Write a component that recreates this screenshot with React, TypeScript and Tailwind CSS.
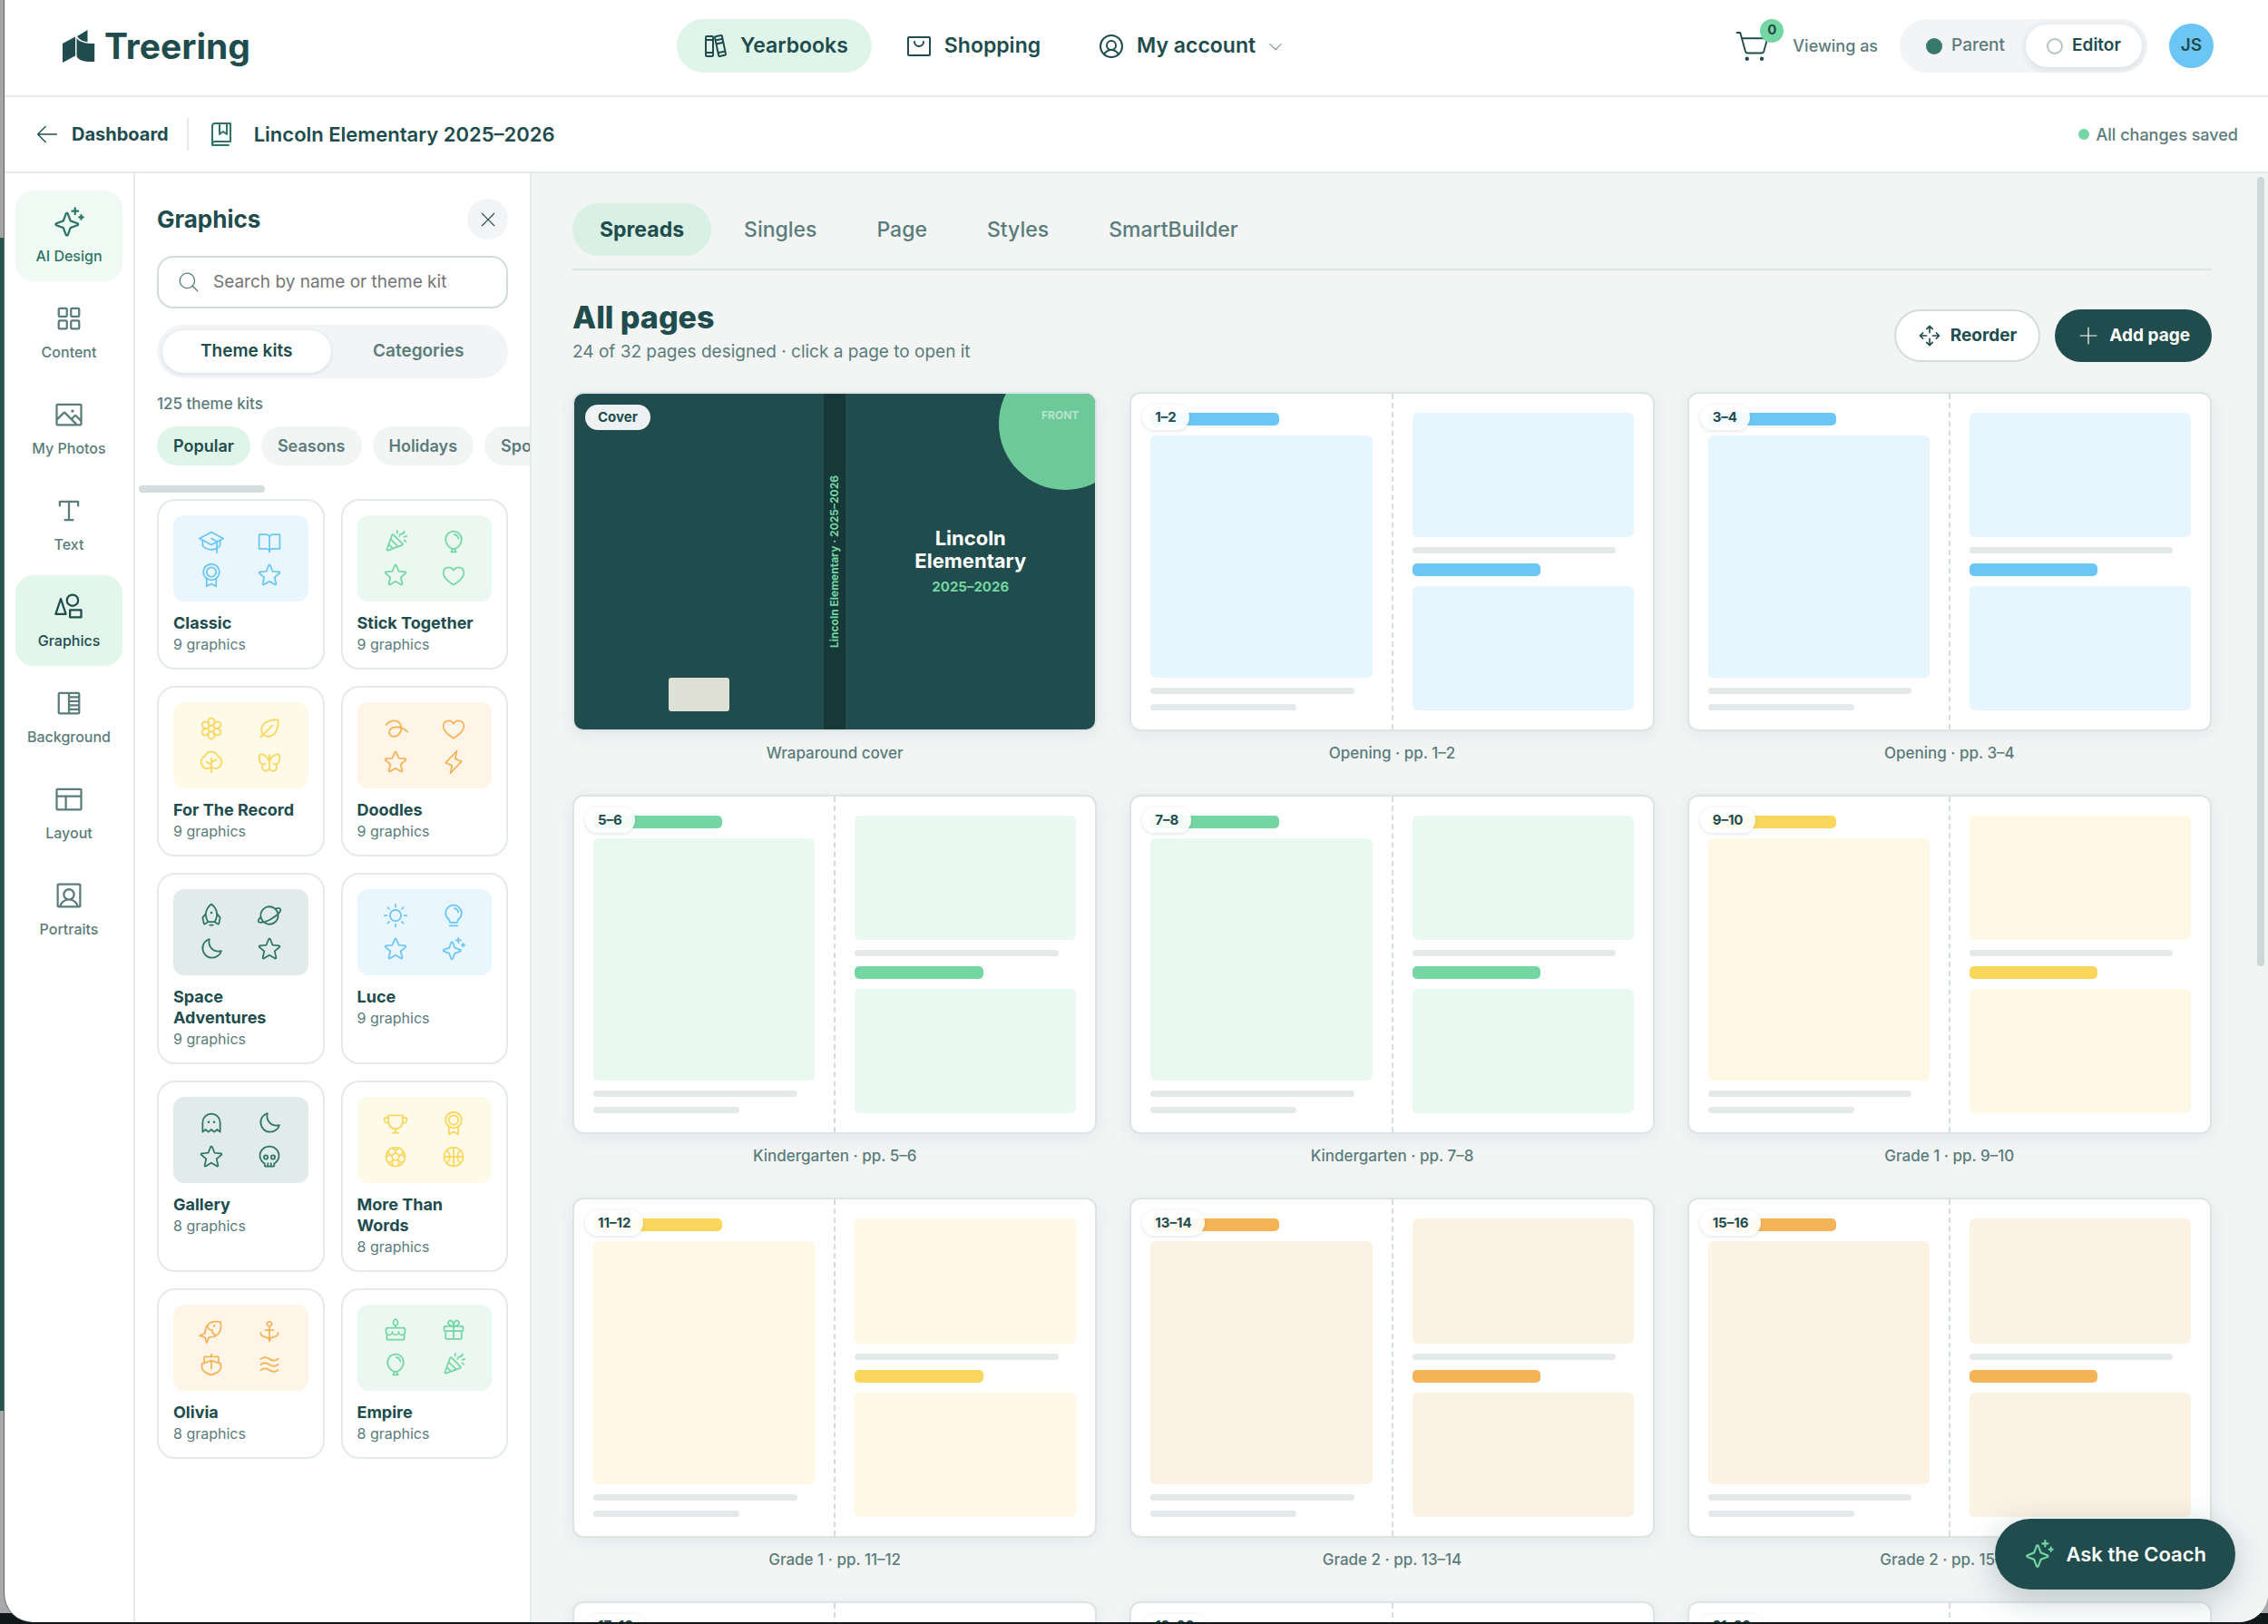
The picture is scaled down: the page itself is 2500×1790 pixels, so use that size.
import React, { useState } from 'react';
import {
  PiAnchor,
  PiArrowLeftLight,
  PiArrowsOutCardinal,
  PiBalloon,
  PiBasketball,
  PiBoat,
  PiBookBookmark,
  PiBookOpen,
  PiBooks,
  PiButterfly,
  PiCake,
  PiCaretDownLight,
  PiConfetti,
  PiFish,
  PiFlower,
  PiGhost,
  PiGift,
  PiGraduationCap,
  PiHeart,
  PiImage,
  PiLayout,
  PiLeaf,
  PiLightbulb,
  PiLightning,
  PiMagnifyingGlassLight,
  PiMedal,
  PiMoon,
  PiPlanet,
  PiPlusLight,
  PiRocket,
  PiScribbleLoop,
  PiShapes,
  PiShoppingBag,
  PiShoppingCartSimpleLight,
  PiSkull,
  PiSoccerBall,
  PiSparkle,
  PiSquareHalf,
  PiSquaresFour,
  PiStar,
  PiSun,
  PiTextT,
  PiTree,
  PiTrophy,
  PiUserCircle,
  PiUserSquare,
  PiWaves,
  PiXLight,
} from 'react-icons/pi';

const navItems = [
  { id: 'yearbooks', icon: PiBooks, label: 'Yearbooks' },
  { id: 'shopping', icon: PiShoppingBag, label: 'Shopping' },
  { id: 'account', icon: PiUserCircle, label: 'My account', caret: true },
];

const tools = [
  { id: 'ai', icon: PiSparkle, label: 'AI Design' },
  { id: 'content', icon: PiSquaresFour, label: 'Content' },
  { id: 'photos', icon: PiImage, label: 'My Photos' },
  { id: 'text', icon: PiTextT, label: 'Text' },
  { id: 'graphics', icon: PiShapes, label: 'Graphics' },
  { id: 'background', icon: PiSquareHalf, label: 'Background' },
  { id: 'layout', icon: PiLayout, label: 'Layout' },
  { id: 'portraits', icon: PiUserSquare, label: 'Portraits' },
];

const kitTones = {
  blue: 'bg-[#e9f6fe] text-[#6cc6f5]',
  green: 'bg-[#eaf8f1] text-[#74d6a2]',
  yellow: 'bg-[#fefae8] text-[#fbd65c]',
  orange: 'bg-[#fef4e7] text-[#f5b357]',
  dark: 'bg-[#e1ebe9] text-[#2e7566]',
};

const kits = [
  { name: 'Classic', count: 9, tone: kitTones.blue, icons: [PiGraduationCap, PiBookOpen, PiMedal, PiStar] },
  { name: 'Stick Together', count: 9, tone: kitTones.green, icons: [PiConfetti, PiBalloon, PiStar, PiHeart] },
  { name: 'For The Record', count: 9, tone: kitTones.yellow, icons: [PiFlower, PiLeaf, PiTree, PiButterfly] },
  { name: 'Doodles', count: 9, tone: kitTones.orange, icons: [PiScribbleLoop, PiHeart, PiStar, PiLightning] },
  { name: 'Space Adventures', count: 9, tone: kitTones.dark, icons: [PiRocket, PiPlanet, PiMoon, PiStar] },
  { name: 'Luce', count: 9, tone: kitTones.blue, icons: [PiSun, PiLightbulb, PiStar, PiSparkle] },
  { name: 'Gallery', count: 8, tone: kitTones.dark, icons: [PiGhost, PiMoon, PiStar, PiSkull] },
  { name: 'More Than Words', count: 8, tone: kitTones.yellow, icons: [PiTrophy, PiMedal, PiSoccerBall, PiBasketball] },
  { name: 'Olivia', count: 8, tone: kitTones.orange, icons: [PiFish, PiAnchor, PiBoat, PiWaves] },
  { name: 'Empire', count: 8, tone: kitTones.green, icons: [PiCake, PiGift, PiBalloon, PiConfetti] },
];

const spreadTones = {
  blue: { bar: 'bg-[#6cc6f5]', block: 'bg-[#e7f6fe]' },
  green: { bar: 'bg-[#74d6a2]', block: 'bg-[#e9f8f0]' },
  yellow: { bar: 'bg-[#fbd65c]', block: 'bg-[#fef8e5]' },
  orange: { bar: 'bg-[#f5b357]', block: 'bg-[#fcf2e3]' },
};

const spreads = [
  { pages: '1–2', section: 'Opening', tone: spreadTones.blue },
  { pages: '3–4', section: 'Opening', tone: spreadTones.blue },
  { pages: '5–6', section: 'Kindergarten', tone: spreadTones.green },
  { pages: '7–8', section: 'Kindergarten', tone: spreadTones.green },
  { pages: '9–10', section: 'Grade 1', tone: spreadTones.yellow },
  { pages: '11–12', section: 'Grade 1', tone: spreadTones.yellow },
  { pages: '13–14', section: 'Grade 2', tone: spreadTones.orange },
  { pages: '15–16', section: 'Grade 2', tone: spreadTones.orange },
  { pages: '17–18', section: 'Grade 3', tone: spreadTones.blue },
  { pages: '19–20', section: 'Grade 3', tone: spreadTones.blue },
  { pages: '21–22', section: 'Grade 4', tone: spreadTones.green },
];

const tabs = ['Spreads', 'Singles', 'Page', 'Styles', 'SmartBuilder'];
const filters = ['Popular', 'Seasons', 'Holidays', 'Sports'];

function Logo() {
  return (
    <a href="#" className="flex items-center gap-2.5 text-[#204c4d]">
      <svg viewBox="0 0 36 36" className="w-9 h-9" fill="currentColor" aria-hidden="true">
        <path d="M0 15 L14 7.500 V28.500 L0 36 Z" />
        <path d="M27.500 0 V13.300 C22 12.500 18 10.500 16 7 Z" />
        <path d="M15.500 9 C18.500 13 24 15 35.200 15 V35 H29 C22 35 15.500 32 15.500 28 Z" />
      </svg>
      <span className="text-[39px] leading-[46px] font-bold">Treering</span>
    </a>
  );
}

function Header() {
  const [role, setRole] = useState('editor');

  return (
    <header className="h-[107px] shrink-0 border-b-2 border-[#e4eae9] flex items-center justify-between pl-16 pr-[60px] pb-1">
      <Logo />

      <nav className="flex items-center gap-2.5">
        {navItems.map((item) => (
          <a
            key={item.id}
            href="#"
            className={`h-[59px] px-[26px] flex items-center gap-3 rounded-full text-[23px] font-semibold ${
              item.id === 'yearbooks' ? 'bg-[#e0f5e9]' : ''
            }`}
          >
            <item.icon className="w-8 h-8" />
            {item.label}
            {item.caret && <PiCaretDownLight className="w-5 h-5 text-[#5a7c7b]" />}
          </a>
        ))}
      </nav>

      <div className="flex items-center gap-6">
        <button aria-label="Cart" className="relative">
          <PiShoppingCartSimpleLight className="w-10 h-10" />
          <span className="absolute -top-2.5 -right-3.5 w-[26px] h-[26px] rounded-full bg-[#74d6a2] flex items-center justify-center text-[15px] font-bold">
            0
          </span>
        </button>
        <span className="text-[18px] font-medium text-[#5a7c7b]">Viewing as</span>
        <div className="h-[59px] p-1.5 flex items-center rounded-full bg-[#f2f4f6]">
          <button
            onClick={() => setRole('parent')}
            aria-pressed={role === 'parent'}
            className="h-full px-[23px] flex items-center gap-2.5 rounded-full text-[19px] font-medium text-[#5a7c7b]"
          >
            <span className="w-[18px] h-[18px] rounded-full bg-[#37796b]" />
            Parent
          </button>
          <button
            onClick={() => setRole('editor')}
            aria-pressed={role === 'editor'}
            className="h-full px-[23px] flex items-center gap-2.5 rounded-full bg-white text-[19px] font-semibold shadow-[0_2px_8px_rgba(32,76,77,0.14)]"
          >
            <span className="w-[18px] h-[18px] rounded-full border-2 border-[#b3c5c4]" />
            Editor
          </button>
        </div>
        <button className="w-[49px] h-[49px] rounded-full bg-[#6cc6f5] text-[19px] font-semibold">JS</button>
      </div>
    </header>
  );
}

function SubHeader() {
  return (
    <div className="h-[84px] shrink-0 border-b-2 border-[#e4eae9] flex items-center pl-8 pr-[33px]">
      <a href="#" className="flex items-center gap-3 text-xl font-bold">
        <PiArrowLeftLight className="w-[30px] h-[30px]" />
        Dashboard
      </a>
      <div className="w-0.5 h-9 mx-5 bg-[#e4eae9]" />
      <PiBookBookmark className="w-8 h-8 text-[#2e7566]" />
      <h1 className="ml-5 text-[22px] font-semibold">Lincoln Elementary 2025–2026</h1>
      <div className="ml-auto flex items-center gap-2 text-[18px] font-medium text-[#5a7c7b]">
        <span className="w-3 h-3 rounded-full bg-[#74d6a2]" />
        All changes saved
      </div>
    </div>
  );
}

function ToolRail() {
  const [active, setActive] = useState('graphics');

  return (
    <nav className="w-[144px] shrink-0 border-r-2 border-[#e4eae9] px-3 py-[19px] flex flex-col gap-1.5">
      {tools.map((tool) => (
        <button
          key={tool.id}
          onClick={() => setActive(tool.id)}
          className={`h-[100px] flex flex-col items-center justify-center gap-[7px] rounded-[20px] text-base font-medium ${
            active === tool.id
              ? 'bg-[#e2f6eb] text-[#204c4d]'
              : tool.id === 'ai'
                ? 'bg-[#f0faf5] text-[#2e7566]'
                : 'text-[#5a7c7b]'
          }`}
        >
          <tool.icon className="w-9 h-9" />
          {tool.label}
        </button>
      ))}
    </nav>
  );
}

function GraphicsPanel() {
  const [view, setView] = useState('kits');
  const [filter, setFilter] = useState('Popular');

  return (
    <aside className="w-[437px] shrink-0 border-r-2 border-[#e4eae9] px-6 pt-7 overflow-hidden">
      <div className="flex items-center justify-between">
        <h2 className="text-[26px] font-bold">Graphics</h2>
        <button aria-label="Close" className="w-[45px] h-[45px] rounded-full bg-[#f2f4f6] flex items-center justify-center">
          <PiXLight className="w-6 h-6" />
        </button>
      </div>

      <label className="mt-[18px] h-[58px] px-5 flex items-center gap-3.5 rounded-[18px] border-2 border-[#d3dedc]">
        <PiMagnifyingGlassLight className="w-[26px] h-[26px] shrink-0 text-[#5a7c7b]" />
        <input
          aria-label="Search graphics"
          placeholder="Search by name or theme kit"
          className="w-full min-w-0 text-[19px] outline-none placeholder:text-[#757575]"
        />
      </label>

      <div className="mt-[18px] h-[59px] p-1.5 grid grid-cols-2 gap-1 rounded-full bg-[#f2f4f6] text-[19px] font-semibold">
        <button
          onClick={() => setView('kits')}
          className={view === 'kits' ? 'rounded-full bg-white shadow-[0_1px_4px_rgba(32,76,77,0.14)]' : 'text-[#5a7c7b]'}
        >
          Theme kits
        </button>
        <button
          onClick={() => setView('categories')}
          className={view === 'categories' ? 'rounded-full bg-white shadow-[0_1px_4px_rgba(32,76,77,0.14)]' : 'text-[#5a7c7b]'}
        >
          Categories
        </button>
      </div>

      <p className="mt-4 text-[17px] leading-6 font-medium text-[#5a7c7b]">125 theme kits</p>

      <div className="mt-[13px] -mr-6 flex gap-3 overflow-hidden">
        {filters.map((name) => (
          <button
            key={name}
            onClick={() => setFilter(name)}
            className={`h-[43px] px-[18px] shrink-0 rounded-full text-[18px] font-semibold ${
              filter === name ? 'bg-[#e0f5e9]' : 'bg-[#f3f5f5] text-[#5a7c7b]'
            }`}
          >
            {name}
          </button>
        ))}
      </div>
      <div className="mt-[22px] -ml-5 w-[139px] h-2 rounded-full bg-[#d3dedc]" />

      <div className="mt-[7px] grid grid-cols-2 gap-[18px]">
        {kits.map((kit) => (
          <button
            key={kit.name}
            className="p-4 flex flex-col items-stretch text-left rounded-[20px] border-2 border-[#e4eae9]"
          >
            <div className={`h-[95px] p-3.5 grid grid-cols-2 gap-2 place-items-center rounded-[12px] ${kit.tone}`}>
              {kit.icons.map((Icon, i) => (
                <Icon key={i} className="w-7 h-7" />
              ))}
            </div>
            <span className="mt-3 text-[18px] leading-[23px] font-bold">{kit.name}</span>
            <span className="mt-0.5 text-base leading-5 text-[#5a7c7b]">{kit.count} graphics</span>
          </button>
        ))}
      </div>
    </aside>
  );
}

function PageBadge({ children }: { children: React.ReactNode }) {
  return (
    <span className="absolute left-3 top-3 h-7 px-3.5 flex items-center rounded-full bg-white/92 text-[15px] font-bold shadow-[0_1px_4px_rgba(32,76,77,0.16)]">
      {children}
    </span>
  );
}

function Caption({ children }: { children: React.ReactNode }) {
  return <span className="mt-3 text-[17px] leading-6 text-center font-medium text-[#5a7c7b]">{children}</span>;
}

function CoverCard() {
  return (
    <button className="flex flex-col">
      <div className="relative w-full aspect-[17/11] grid grid-cols-[1fr_24px_1fr] overflow-hidden rounded-[12px] border-2 border-[#dde5e4] bg-[#204c4d] shadow-[0_4px_18px_rgba(32,76,77,0.08)]">
        <div className="px-[18px] pt-[18px] pb-5 flex flex-col items-center justify-between">
          <span className="self-start text-[12px] leading-3 font-bold text-white/50">BACK</span>
          <span className="w-[67px] h-[37px] rounded-[3px] bg-[#dde0d2]" />
        </div>
        <div className="flex items-center justify-center bg-[#163839]">
          <span className="rotate-180 [writing-mode:vertical-rl] text-[12px] leading-6 font-bold text-[#74d6a2]">
            Lincoln Elementary · 2025–2026
          </span>
        </div>
        <div className="relative flex flex-col items-center justify-center">
          <span className="absolute -top-10 -right-10 w-[146px] h-[146px] rounded-full bg-[#6ec99a]" />
          <span className="absolute top-[18px] right-[18px] text-[12px] leading-3 font-bold text-white/50">FRONT</span>
          <span className="w-[140px] text-[22px] leading-[25px] font-bold text-white">Lincoln Elementary</span>
          <span className="mt-1.5 text-[15px] leading-5 font-bold text-[#74d6a2]">2025–2026</span>
        </div>
        <PageBadge>Cover</PageBadge>
      </div>
      <Caption>Wraparound cover</Caption>
    </button>
  );
}

function SpreadCard({ pages, section, tone }: (typeof spreads)[number]) {
  return (
    <button className="flex flex-col">
      <div className="relative w-full aspect-[17/11] flex overflow-hidden rounded-[12px] border-2 border-[#dde5e4] bg-white shadow-[0_4px_18px_rgba(32,76,77,0.08)]">
        <div className="flex-1 p-[21px] flex flex-col gap-[11px]">
          <span className={`w-[58%] h-3.5 rounded-[5px] ${tone.bar}`} />
          <span className={`flex-1 rounded-[6px] ${tone.block}`} />
          <span className="w-[92%] h-[7px] rounded-full bg-[#e4eae9]" />
          <span className="w-[66%] h-[7px] rounded-full bg-[#e4eae9]" />
        </div>
        <div className="flex-1 p-[21px] flex flex-col gap-[11px] border-l-2 border-dashed border-[#d3dedc]">
          <span className={`flex-1 rounded-[6px] ${tone.block}`} />
          <span className="w-[92%] h-[7px] rounded-full bg-[#e4eae9]" />
          <span className={`w-[58%] h-3.5 rounded-[5px] ${tone.bar}`} />
          <span className={`flex-1 rounded-[6px] ${tone.block}`} />
        </div>
        <PageBadge>{pages}</PageBadge>
      </div>
      <Caption>
        {section} · pp. {pages}
      </Caption>
    </button>
  );
}

function PagesView() {
  const [tab, setTab] = useState('Spreads');

  return (
    <main className="relative flex-1 min-w-0 pl-[45px] pr-[62px] pt-[33px] overflow-hidden bg-[#f3f5f5]">
      <div className="pb-3.5 flex gap-1.5 border-b-2 border-[#dde5e4]">
        {tabs.map((name) => (
          <button
            key={name}
            onClick={() => setTab(name)}
            className={`h-[58px] px-[30px] rounded-full text-[23px] ${
              tab === name ? 'bg-[#d9f0e4] font-bold' : 'font-medium text-[#5a7c7b]'
            }`}
          >
            {name}
          </button>
        ))}
      </div>

      <div className="mt-7 flex items-center justify-between">
        <div>
          <h2 className="text-[34px] leading-[48px] font-extrabold">All pages</h2>
          <p className="text-[19px] leading-7 text-[#5a7c7b]">24 of 32 pages designed · click a page to open it</p>
        </div>
        <div className="mt-3 flex items-center gap-4 text-[19px] font-bold">
          <button className="h-[58px] px-6 flex items-center gap-2.5 rounded-full bg-white border-2 border-[#d3dedc]">
            <PiArrowsOutCardinal className="w-[26px] h-[26px]" />
            Reorder
          </button>
          <button className="h-[58px] px-6 flex items-center gap-2.5 rounded-full bg-[#204c4d] text-white">
            <PiPlusLight className="w-[26px] h-[26px]" />
            Add page
          </button>
        </div>
      </div>

      <div className="mt-[30px] grid grid-cols-3 gap-x-9 gap-y-[34px]">
        <CoverCard />
        {spreads.map((spread) => (
          <SpreadCard key={spread.pages} {...spread} />
        ))}
      </div>

      {/* Scrollbar thumb */}
      <div className="absolute top-1 right-1 w-2 h-[870px] rounded-full bg-[#ccd8d8]" />

      <button className="absolute right-9 bottom-9 h-[78px] px-8 flex items-center gap-3 rounded-full bg-[#204c4d] text-white text-[22px] font-semibold shadow-[0_10px_36px_rgba(32,76,77,0.28)]">
        <PiSparkle className="w-[34px] h-[34px] text-[#74d6a2]" />
        Ask the Coach
      </button>
    </main>
  );
}

export default function App() {
  return (
    <div className="h-screen pl-1 pb-0.5 overflow-hidden bg-[linear-gradient(to_bottom,#a5a5a5_0_262px,#25544d_262px_1555px,#a9a9ab_1555px_1778px,#10181a_1778px)] font-['Inter',sans-serif] text-[#204c4d]">
      <div className="h-full flex flex-col overflow-hidden rounded-b-[32px] border-l border-[#5f6564] bg-white">
        <Header />
        <SubHeader />
        <div className="flex-1 min-h-0 flex">
          <ToolRail />
          <GraphicsPanel />
          <PagesView />
        </div>
      </div>
    </div>
  );
}
